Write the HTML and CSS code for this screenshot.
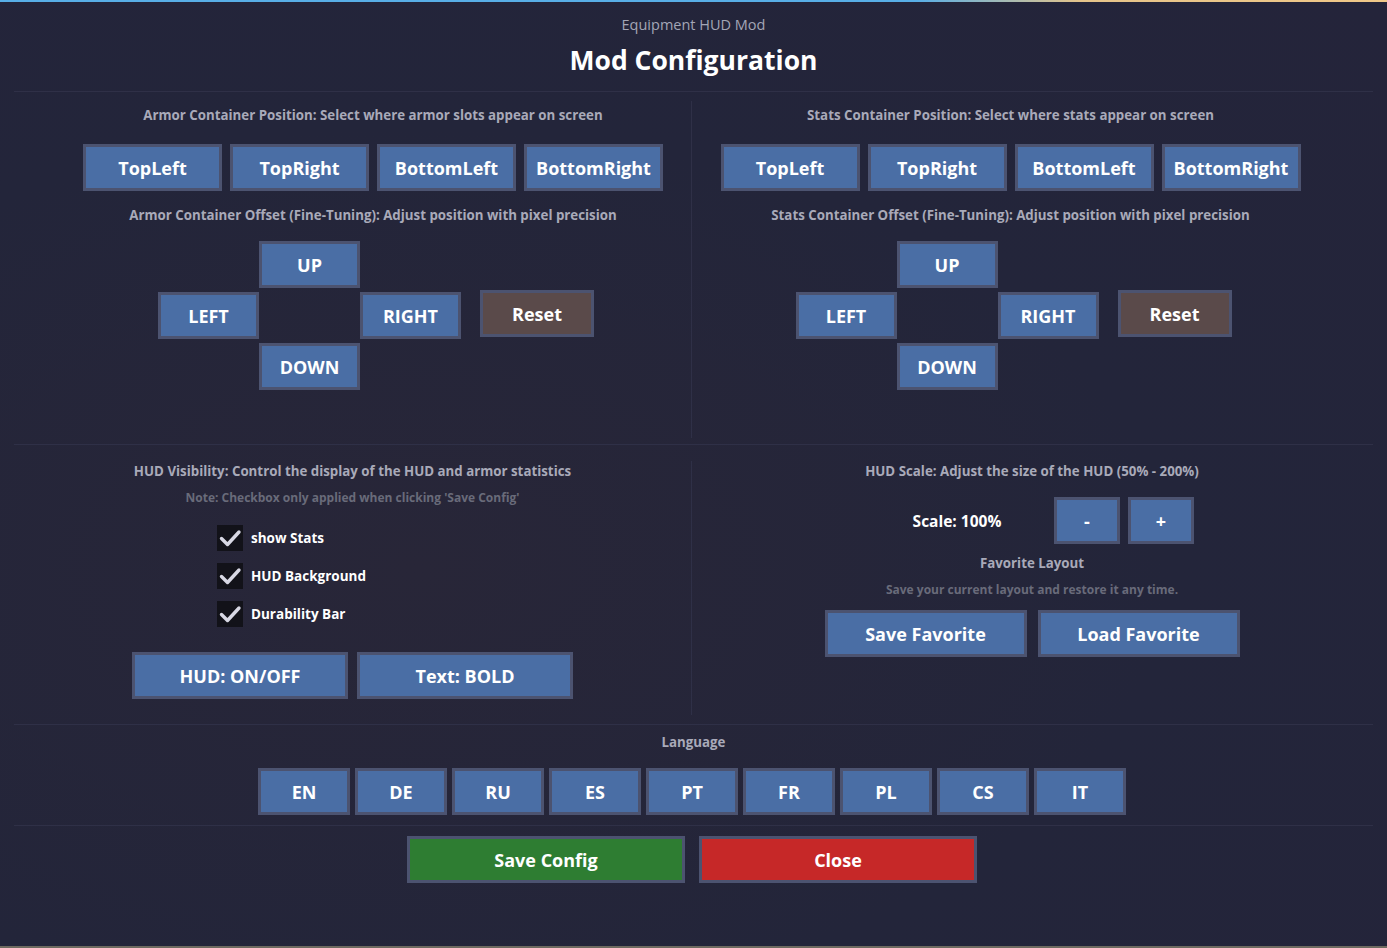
FILE: index.html
```html
<!DOCTYPE html>
<html>
<head>
<meta charset="utf-8">
<link rel="stylesheet" href="styles.css">
</head>
<body>
<div class="topline"></div>
<header class="header">
  <div class="subtitle">Equipment HUD Mod</div>
  <h1 class="title">Mod Configuration</h1>
</header>
<div class="hr"></div>

<section class="pos-section">
  <div class="pos-col left">
    <div class="label">Armor Container Position: Select where armor slots appear on screen</div>
    <div class="btn-row corners">
      <button class="btn">TopLeft</button>
      <button class="btn">TopRight</button>
      <button class="btn">BottomLeft</button>
      <button class="btn">BottomRight</button>
    </div>
    <div class="label offset-label">Armor Container Offset (Fine-Tuning): Adjust position with pixel precision</div>
    <div class="pad-wrap">
      <div class="dpad">
        <button class="btn up">UP</button>
        <button class="btn lft">LEFT</button>
        <button class="btn rgt">RIGHT</button>
        <button class="btn dn">DOWN</button>
      </div>
      <button class="btn reset">Reset</button>
    </div>
  </div>
  <div class="pos-col">
    <div class="label">Stats Container Position: Select where stats appear on screen</div>
    <div class="btn-row corners">
      <button class="btn">TopLeft</button>
      <button class="btn">TopRight</button>
      <button class="btn">BottomLeft</button>
      <button class="btn">BottomRight</button>
    </div>
    <div class="label offset-label">Stats Container Offset (Fine-Tuning): Adjust position with pixel precision</div>
    <div class="pad-wrap">
      <div class="dpad">
        <button class="btn up">UP</button>
        <button class="btn lft">LEFT</button>
        <button class="btn rgt">RIGHT</button>
        <button class="btn dn">DOWN</button>
      </div>
      <button class="btn reset">Reset</button>
    </div>
  </div>
</section>
<div class="hr"></div>

<section class="mid-section">
  <div class="mid-col left">
    <div class="label">HUD Visibility: Control the display of the HUD and armor statistics</div>
    <div class="note">Note: Checkbox only applied when clicking 'Save Config'</div>
    <div class="checks">
      <div class="check-row"><span class="box"><svg viewBox="0 0 26 26" width="26" height="26"><path d="M4.5 13.5 L10.5 19.5 L22 7" fill="none" stroke="#d8d8e4" stroke-width="3.4" stroke-linecap="round" stroke-linejoin="round"/></svg></span><span class="check-label">show Stats</span></div>
      <div class="check-row"><span class="box"><svg viewBox="0 0 26 26" width="26" height="26"><path d="M4.5 13.5 L10.5 19.5 L22 7" fill="none" stroke="#d8d8e4" stroke-width="3.4" stroke-linecap="round" stroke-linejoin="round"/></svg></span><span class="check-label">HUD Background</span></div>
      <div class="check-row"><span class="box"><svg viewBox="0 0 26 26" width="26" height="26"><path d="M4.5 13.5 L10.5 19.5 L22 7" fill="none" stroke="#d8d8e4" stroke-width="3.4" stroke-linecap="round" stroke-linejoin="round"/></svg></span><span class="check-label">Durability Bar</span></div>
    </div>
    <div class="btn-row wide">
      <button class="btn">HUD: ON/OFF</button>
      <button class="btn">Text: BOLD</button>
    </div>
  </div>
  <div class="mid-col">
    <div class="label">HUD Scale: Adjust the size of the HUD (50% - 200%)</div>
    <div class="scale-row">
      <span class="scale-text">Scale: 100%</span>
      <button class="btn small">-</button>
      <button class="btn small">+</button>
    </div>
    <div class="label fav-label">Favorite Layout</div>
    <div class="note fav-note">Save your current layout and restore it any time.</div>
    <div class="btn-row fav">
      <button class="btn">Save Favorite</button>
      <button class="btn">Load Favorite</button>
    </div>
  </div>
</section>
<div class="hr"></div>

<section class="lang-section">
  <div class="label">Language</div>
  <div class="btn-row langs">
    <button class="btn">EN</button>
    <button class="btn">DE</button>
    <button class="btn">RU</button>
    <button class="btn">ES</button>
    <button class="btn">PT</button>
    <button class="btn">FR</button>
    <button class="btn">PL</button>
    <button class="btn">CS</button>
    <button class="btn">IT</button>
  </div>
</section>
<div class="hr"></div>

<footer class="footer">
  <button class="btn save">Save Config</button>
  <button class="btn close">Close</button>
</footer>
</body>
</html>
```

FILE: styles.css
```css
html, body {
  margin: 0;
  padding: 0;
  height: 948px;
  overflow: hidden;
}
body {
  background: radial-gradient(ellipse at 30% 60%, #282638 0%, #23253a 55%, #24243a 100%);
  font-family: "Open Sans", "Lato", sans-serif;
  color: #fff;
  border-bottom: 2px solid #6e6a60;
  box-sizing: border-box;
}
.topline {
  height: 2px;
  background: linear-gradient(90deg, #58aee6 0%, #58aee6 66%, #e6c48a 78%, #f0c888 100%);
}
.header {
  text-align: center;
  padding-top: 13px;
}
.subtitle {
  font-size: 14.5px;
  line-height: 20px;
  color: #a3a6b6;
}
.title {
  margin: 7px 0 0;
  font-size: 26.5px;
  line-height: 36px;
  font-weight: 700;
  color: #fff;
}
.hr {
  height: 1px;
  margin: 13px 14px 0;
  background: #2f3047;
}
.label {
  font-size: 13.3px;
  line-height: 16px;
  font-weight: 700;
  color: #a9aab9;
  text-align: center;
}
.note {
  font-size: 12px;
  line-height: 16px;
  font-weight: 700;
  color: #696b7a;
  text-align: center;
}
.btn {
  box-sizing: border-box;
  height: 47px;
  border: 3px solid #4c5370;
  background: #4a6ea5;
  color: #fff;
  font-family: inherit;
  font-size: 18px;
  font-weight: 700;
  padding: 0;
  margin: 0;
}
.btn-row {
  display: flex;
  justify-content: center;
}

/* position section */
.pos-section {
  display: grid;
  grid-template-columns: 637px 637px;
  justify-content: start;
  margin: 9px 0 0 55px;
}
.pos-col {
  padding-top: 6px;
  padding-bottom: 48px;
}
.pos-col.left {
  border-right: 1px solid #2f3047;
}
.corners {
  gap: 8px;
  margin-top: 21px;
}
.corners .btn {
  width: 139px;
}
.offset-label {
  margin-top: 16px;
}
.pad-wrap {
  display: flex;
  justify-content: center;
  align-items: center;
  margin-top: 18px;
  padding-left: 6px;
}
.dpad {
  display: grid;
  grid-template-columns: 101px 101px 101px;
  grid-template-rows: 47px 47px 47px;
  row-gap: 4px;
}
.dpad .up { grid-column: 2; grid-row: 1; }
.dpad .lft { grid-column: 1; grid-row: 2; }
.dpad .rgt { grid-column: 3; grid-row: 2; }
.dpad .dn { grid-column: 2; grid-row: 3; }
.reset {
  width: 114px;
  margin-left: 19px;
  margin-top: -4px;
  background: #5a4a4a;
}
.pos-section + .hr { margin-top: 6px; }

/* middle section */
.mid-section {
  display: grid;
  grid-template-columns: 678px 680px;
  margin: 16px 14px 0;
}
.mid-col {
  padding-top: 2px;
  padding-bottom: 16px;
}
.mid-col.left {
  border-right: 1px solid #2f3047;
}
.mid-col .note {
  margin-top: 11px;
}
.checks {
  display: flex;
  flex-direction: column;
  gap: 12px;
  margin-top: 19px;
  padding-left: 203px;
}
.check-row {
  display: flex;
  align-items: center;
  gap: 8px;
}
.box {
  width: 26px;
  height: 26px;
  background: #121219;
  display: block;
}
.box svg { display: block; }
.check-label {
  font-size: 13.5px;
  font-weight: 700;
  color: #fff;
}
.wide {
  gap: 9px;
  margin-top: 25px;
}
.wide .btn {
  width: 216px;
}
.scale-row {
  display: flex;
  justify-content: center;
  align-items: center;
  margin-top: 18px;
  padding-left: 12px;
}
.scale-text {
  font-size: 15.5px;
  font-weight: 700;
  width: 150px;
  text-align: center;
  margin-right: 22px;
}
.btn.small {
  width: 66px;
  margin-right: 8px;
}
.btn.small:last-child { margin-right: 0; }
.fav-label { margin-top: 11px; }
.fav-note { margin-top: 11px !important; }
.fav {
  gap: 11px;
  margin-top: 12px;
}
.fav .btn {
  width: 202px;
}
.mid-section + .hr { margin-top: 9px; }

/* language */
.lang-section {
  padding-top: 9px;
}
.langs {
  gap: 5px;
  margin-top: 18px;
  padding-right: 3px;
}
.langs .btn {
  width: 92px;
}
.lang-section + .hr { margin-top: 10px; }

/* footer */
.footer {
  display: flex;
  justify-content: center;
  gap: 14px;
  margin-top: 10px;
  padding-right: 3px;
}
.footer .btn {
  width: 278px;
}
.save { background: #2e7d32; }
.close { background: #c62828; }
```
